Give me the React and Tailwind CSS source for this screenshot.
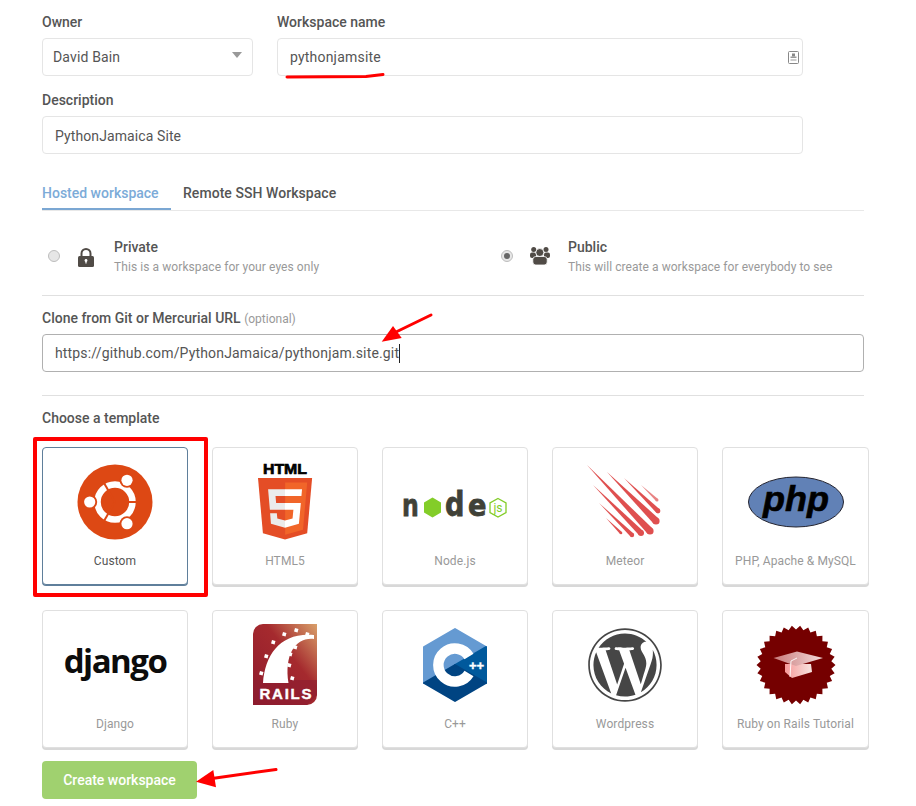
import { FaWordpress } from 'react-icons/fa';

const FIRST_ROW = [
    { name: 'Custom', logo: <Ubuntu />, selected: true },
    { name: 'HTML5', logo: <Html5 /> },
    { name: 'Node.js', logo: <NodeLogo /> },
    { name: 'Meteor', logo: <Meteor /> },
    { name: 'PHP, Apache & MySQL', logo: <Php />, wide: true },
];

const SECOND_ROW = [
    { name: 'Django', logo: <Django /> },
    { name: 'Ruby', logo: <Rails /> },
    { name: 'C++', logo: <Cpp /> },
    { name: 'Wordpress', logo: <FaWordpress className="text-[#464646] text-[76px]" /> },
    { name: 'Ruby on Rails Tutorial', logo: <Badge />, wide: true },
];

function LockIcon() {
    return (
        <svg width="16" height="19" viewBox="0 0 16 19">
            <path d="M3.500 9V5.500a4.500 4.500 0 0 1 9 0V9" fill="none" stroke="#504b46" strokeWidth="2" />
            <rect x="0" y="8" width="16" height="11" rx="1.500" fill="#504b46" />
            <circle cx="8" cy="12.500" r="1.400" fill="#fff" />
            <rect x="7.400" y="12.500" width="1.200" height="3" fill="#fff" />
        </svg>
    );
}

function UsersIcon() {
    return (
        <svg width="20" height="18" viewBox="0 0 20 18" fill="#504b46">
            <circle cx="3.700" cy="2.500" r="2.500" />
            <circle cx="16" cy="2.500" r="2.500" />
            <rect x="0" y="5.500" width="6" height="5.500" rx="2" />
            <rect x="14" y="5.500" width="6" height="5.500" rx="2" />
            <circle cx="9.800" cy="5.500" r="4" stroke="#fff" strokeWidth="0.800" />
            <rect x="2.800" y="9.500" width="14.400" height="8.500" rx="3" stroke="#fff" strokeWidth="0.800" />
        </svg>
    );
}

function Ubuntu() {
    const gaps = [0, 120, 240];
    const dots = [[12, -21.7], [-25.3, 0], [12, 21.7]];
    return (
        <svg width="76" height="76" viewBox="-38 -38 76 76">
            <circle r="37.500" fill="#dd4814" />
            <circle r="17.500" fill="none" stroke="#fff" strokeWidth="6.500" />
            {gaps.map(a => (
                <line key={a} x1="0" y1="0" x2="24" y2="0" stroke="#dd4814" strokeWidth="2" transform={`rotate(${a})`} />
            ))}
            {dots.map(([x, y]) => (
                <g key={x + '' + y}>
                    <circle cx={x} cy={y} r="7.500" fill="#dd4814" />
                    <circle cx={x} cy={y} r="5.600" fill="#fff" />
                </g>
            ))}
        </svg>
    );
}

function Html5() {
    return (
        <svg width="56" height="92" viewBox="0 -6 56 92">
            <text x="28" y="11.500" textAnchor="middle" fontFamily="'Liberation Sans', sans-serif" fontWeight="700" fontSize="15" textLength="44" lengthAdjust="spacingAndGlyphs" fill="#000" stroke="#000" strokeWidth="0.700">HTML</text>
            <g transform="translate(-2.600 16) scale(0.12 0.12)">
                <path fill="#e44d26" d="M71 460L30 0h451l-41 460-185 52z" />
                <path fill="#f16529" d="M256 472l149-41 35-394H256z" />
                <path fill="#ebebeb" d="M256 208h-75l-5-58h80V94H114l15 171h127zm-1 147l-64-17-4-45h-56l7 89 117 32z" />
                <path fill="#fff" d="M255 208v57h70l-7 73-63 17v59l116-32 16-174zm0-114v56h137l5-56z" />
            </g>
        </svg>
    );
}

function NodeLogo() {
    return (
        <svg width="108" height="48" viewBox="0 -4 108 48">
            <g fontFamily="'DejaVu Sans', sans-serif" fontWeight="700" fill="#404137" stroke="#404137" strokeWidth="0.800">
                <text transform="translate(1 34) scale(0.76 1)" fontSize="31">n</text>
                <text transform="translate(44 34) scale(0.8 1)" fontSize="34">d</text>
                <text transform="translate(67 34) scale(0.88 1)" fontSize="31">e</text>
            </g>
            <polygon points="31.500,15.500 40,20.500 40,30.500 31.500,35.500 23,30.500 23,20.500" fill="#83cd29" />
            <polygon points="97,16.500 105,21 105,30.500 97,35 89,30.500 89,21" fill="#fff" stroke="#83cd29" strokeWidth="1.300" />
            <text x="97" y="30" textAnchor="middle" fontFamily="Roboto, sans-serif" fontSize="12" fill="#83cd29">js</text>
        </svg>
    );
}

// one meteor trail: thin at the tip, round at the head
function Streak({ x1, y1, x2, y2, w, o = 1 }) {
    const len = Math.hypot(x2 - x1, y2 - y1);
    const nx = ((y2 - y1) / len) * w;
    const ny = ((x1 - x2) / len) * w;
    return (
        <g fill="#df4f4f" opacity={o}>
            <polygon points={`${x1},${y1} ${x2 + nx},${y2 + ny} ${x2 - nx},${y2 - ny}`} />
            <circle cx={x2} cy={y2} r={w} />
        </g>
    );
}

function Meteor() {
    const trails = [
        [0, 0, 63, 66, 3.600],
        [20, 7, 69, 56, 3.600],
        [37, 13, 71, 46, 2.400],
        [54, 20, 70, 35, 1.500, 0.700],
        [6, 20, 54, 68, 3],
        [12, 38, 45, 70, 2.200],
        [19, 53, 34, 68, 1.300],
    ];
    return (
        <svg width="76" height="74" viewBox="0 0 76 74">
            {trails.map(([x1, y1, x2, y2, w, o]) => (
                <Streak key={x1} x1={x1} y1={y1} x2={x2} y2={y2} w={w} o={o} />
            ))}
        </svg>
    );
}

function Php() {
    return (
        <svg width="98" height="52" viewBox="0 0 98 52">
            <ellipse cx="49" cy="26" rx="47.500" ry="25" fill="#6181b6" stroke="#23232f" strokeWidth="1" />
            <text x="49" y="35" textAnchor="middle" fontFamily="'Liberation Sans', sans-serif" fontWeight="700" fontStyle="italic" fontSize="35" textLength="66" lengthAdjust="spacingAndGlyphs" fill="#000" stroke="#000" strokeWidth="0.600">php</text>
        </svg>
    );
}

function Django() {
    return <span className="font-['Open_Sans',sans-serif] font-bold text-[33px] leading-none tracking-[-1.5px] text-[#0c0c0c] -mt-2">django</span>;
}

function Rails() {
    const blocks = [[7, 47], [12, 30], [19, 16], [30, 8], [42, 4], [53, 8], [41, 21], [36, 28], [35, 39], [38, 52]];
    return (
        <svg width="64" height="81" viewBox="0 0 64 81">
            <defs>
                <linearGradient id="railsBg" x1="0" y1="1" x2="1" y2="0">
                    <stop offset="0" stopColor="#8f1a2c" />
                    <stop offset="0.600" stopColor="#a52a2e" />
                    <stop offset="1" stopColor="#d9a06a" />
                </linearGradient>
            </defs>
            <path d="M10 0H64V71a10 10 0 0 1-10 10H0V10A10 10 0 0 1 10 0z" fill="url(#railsBg)" />
            <polygon points="0,56 64,56 64,71 54,81 0,81" fill="#8c1d30" opacity="0.600" />
            <path d="M10 59C12 30 28 8 61 11L61 15C43 13 31 30 35.500 59Z" fill="#fff" />
            {blocks.map(([x, y]) => (
                <rect key={x + '' + y} x={x} y={y} width="3.600" height="3.600" fill="#fff" transform={`rotate(15 ${x} ${y})`} />
            ))}
            <text x="32.500" y="75" textAnchor="middle" fontFamily="'Liberation Sans', sans-serif" fontWeight="700" fontSize="15" textLength="52" fill="#fff" stroke="#fff" strokeWidth="0.400">RAILS</text>
        </svg>
    );
}

function Cpp() {
    return (
        <svg width="64" height="74" viewBox="0 0 64 74">
            <g strokeLinejoin="round" strokeWidth="2">
                <polygon points="32,1 63,19 32,37 1,55 1,19" fill="#659ad2" stroke="#659ad2" />
                <polygon points="63,19 63,55 32,37" fill="#00599c" stroke="#00599c" />
                <polygon points="1,55 32,37 63,55 32,73" fill="#004482" stroke="#004482" />
            </g>
            <path d="M46 28.500A16.500 16.500 0 1 0 46 45.500" fill="none" stroke="#fff" strokeWidth="10.500" />
            <text x="53.500" y="41.500" textAnchor="middle" fontFamily="'Liberation Sans', sans-serif" fontWeight="700" fontSize="13" fill="#fff" stroke="#fff" strokeWidth="0.400">++</text>
        </svg>
    );
}

function Badge() {
    const spikes = 30;
    const pts = [];
    for (let i = 0; i < spikes * 2; i++) {
        const r = i % 2 ? 35.500 : 39.500;
        const a = (i * Math.PI) / spikes;
        pts.push(`${(40 + r * Math.cos(a)).toFixed(2)},${(40 + r * Math.sin(a)).toFixed(2)}`);
    }
    return (
        <svg width="80" height="80" viewBox="0 0 80 80">
            <defs>
                <linearGradient id="capTop" x1="0" y1="0" x2="1" y2="0">
                    <stop offset="0" stopColor="#c97a7a" />
                    <stop offset="1" stopColor="#f3dcdc" />
                </linearGradient>
                <linearGradient id="capBase" x1="0" y1="0" x2="1" y2="0">
                    <stop offset="0" stopColor="#f79a9a" />
                    <stop offset="1" stopColor="#f6e4e0" />
                </linearGradient>
            </defs>
            <polygon points={pts.join(' ')} fill="#750000" />
            <g transform="translate(2 0)">
                <polygon points="27,39 53,39 54,47 34,53 27,47" fill="url(#capBase)" />
                <polygon points="15.500,33 39,26.500 65,33 38,41" fill="url(#capTop)" />
                <polyline points="39,33 33,36 32,52" fill="none" stroke="#fff" strokeWidth="0.900" />
            </g>
        </svg>
    );
}

function TemplateCard({ name, logo, selected, wide }) {
    return (
        <div className={`h-[138px] bg-white rounded-[4px] border flex flex-col ${wide ? 'w-[147px]' : 'w-[146px]'} ${selected ? 'border-[#5f7f9b] shadow-[0_1px_0_#5f7f9b]' : 'border-[#e0e0e0] shadow-[0_2px_0_#d8d8d8]'}`}>
            <div className="h-[103px] pt-1 flex items-center justify-center">{logo}</div>
            <div className={`h-5 leading-5 text-xs tracking-[0.1px] text-center ${selected ? 'text-[#555]' : 'text-[#999]'}`}>{name}</div>
        </div>
    );
}

function Radio({ checked }) {
    return (
        <div className="w-3 h-3 -mt-[2px] rounded-full bg-[#e6e6e6] border border-[#bdbdbd] flex items-center justify-center">
            {checked && <div className="w-[6px] h-[6px] rounded-full bg-[#666]" />}
        </div>
    );
}

function Annotations() {
    return (
        <>
            <div className="absolute left-[33px] top-[437px] w-[175px] h-[160px] border-4 border-[#f00] rounded-[2px]" />
            <svg className="absolute left-0 top-0" width="916" height="806" viewBox="0 0 916 806">
                <path d="M287 77L366 76.500L383 74.500" fill="none" stroke="#f00" strokeWidth="3" strokeLinecap="round" />
                <line x1="431" y1="315" x2="396" y2="332" stroke="#f00" strokeWidth="3" strokeLinecap="round" />
                <polygon points="381.700,341.700 393,326 401.700,338" fill="#f00" />
                <line x1="276" y1="769.500" x2="212" y2="778.500" stroke="#f00" strokeWidth="3" strokeLinecap="round" />
                <polygon points="196,781.700 213.300,770 216,787.300" fill="#f00" />
            </svg>
        </>
    );
}

export default function App() {
    return (
        <div className="relative w-[916px] h-[806px] overflow-hidden bg-white pl-[42px] pt-3 font-['Roboto',sans-serif] text-sm text-[#555]">
            {/* Owner + name */}
            <div className="flex gap-6">
                <div className="w-[211px]">
                    <div className="h-5 leading-5 font-medium mb-[6px]">Owner</div>
                    <div className="h-[38px] border border-[#e5e5e5] rounded-[4px] px-[10px] flex items-center justify-between tracking-[0.15px]">
                        <span>David Bain</span>
                        <span className="w-0 h-0 border-x-[5px] border-x-transparent border-t-[6px] border-t-[#999] -mt-1" />
                    </div>
                </div>
                <div className="w-[526px]">
                    <div className="h-5 leading-5 font-medium mb-[6px]">Workspace name</div>
                    <div className="h-[38px] border border-[#e5e5e5] rounded-[4px] pl-3 pr-[3px] flex items-center justify-between tracking-[0.2px]">
                        <span>pythonjamsite</span>
                        <svg width="11" height="13" viewBox="0 0 11 13">
                            <rect x="0.500" y="0.500" width="10" height="12" rx="1" fill="#fff" stroke="#888" />
                            <rect x="4" y="2.500" width="3" height="3" fill="#888" />
                            <rect x="2.500" y="5.500" width="6" height="1.500" fill="#999" />
                            <rect x="2.500" y="8" width="6" height="2" fill="#ccc" />
                        </svg>
                    </div>
                </div>
            </div>

            {/* Description */}
            <div className="h-5 leading-5 font-medium mt-[14px] mb-[6px]">Description</div>
            <div className="w-[761px] h-[38px] border border-[#e5e5e5] rounded-[4px] px-3 pt-px flex items-center tracking-[0.1px]">PythonJamaica Site</div>

            {/* Tabs */}
            <div className="w-[822px] mt-[29px] flex border-b border-[#e8e8e8]">
                <div className="w-[129px] h-[27px] leading-5 font-medium text-[#7cabd8] border-b-2 border-[#7ba7d3]">Hosted workspace</div>
                <div className="pl-3 leading-5 font-medium tracking-[0.05px]">Remote SSH Workspace</div>
            </div>

            {/* Visibility */}
            <div className="w-[822px] mt-[26px] mb-[18px] flex">
                <div className="w-[453px] flex items-center pl-[6px]">
                    <Radio />
                    <div className="w-[54px] pl-[18px]"><LockIcon /></div>
                    <div>
                        <div className="h-5 leading-5 font-medium">Private</div>
                        <div className="h-5 leading-5 text-xs tracking-[0.08px] text-[#999]">This is a workspace for your eyes only</div>
                    </div>
                </div>
                <div className="flex items-center pl-[6px]">
                    <Radio checked />
                    <div className="w-[55px] pl-[17px] -mt-[2px]"><UsersIcon /></div>
                    <div>
                        <div className="h-5 leading-5 font-medium">Public</div>
                        <div className="h-5 leading-5 text-xs tracking-[0.06px] text-[#999]">This will create a workspace for everybody to see</div>
                    </div>
                </div>
            </div>
            <div className="w-[822px] border-t border-[#e0e0e0]" />

            {/* Clone url */}
            <div className="h-5 leading-5 font-medium mt-3 mb-[6px]">
                Clone from Git or Mercurial URL <span className="font-normal text-xs text-[#999]">(optional)</span>
            </div>
            <div className="w-[822px] h-[38px] border border-[#b0b0b0] rounded-[4px] px-3 flex items-center tracking-[0.16px]">
                https://github.com/PythonJamaica/pythonjam.site.git
                <span className="inline-block w-px h-[19px] bg-[#222]" />
            </div>
            <div className="w-[822px] mt-[23px] border-t border-[#e0e0e0]" />

            {/* Templates */}
            <div className="h-5 leading-5 font-medium mt-3 mb-[19px]">Choose a template</div>
            <div className="flex gap-6 mb-[25px]">
                {FIRST_ROW.map(t => <TemplateCard key={t.name} {...t} />)}
            </div>
            <div className="flex gap-6 mb-[13px]">
                {SECOND_ROW.map(t => <TemplateCard key={t.name} {...t} />)}
            </div>
            <div className="w-[155px] h-[38px] rounded-[4px] bg-[#a0d16f] text-white font-medium flex items-center justify-center">Create workspace</div>

            <Annotations />
        </div>
    );
}
